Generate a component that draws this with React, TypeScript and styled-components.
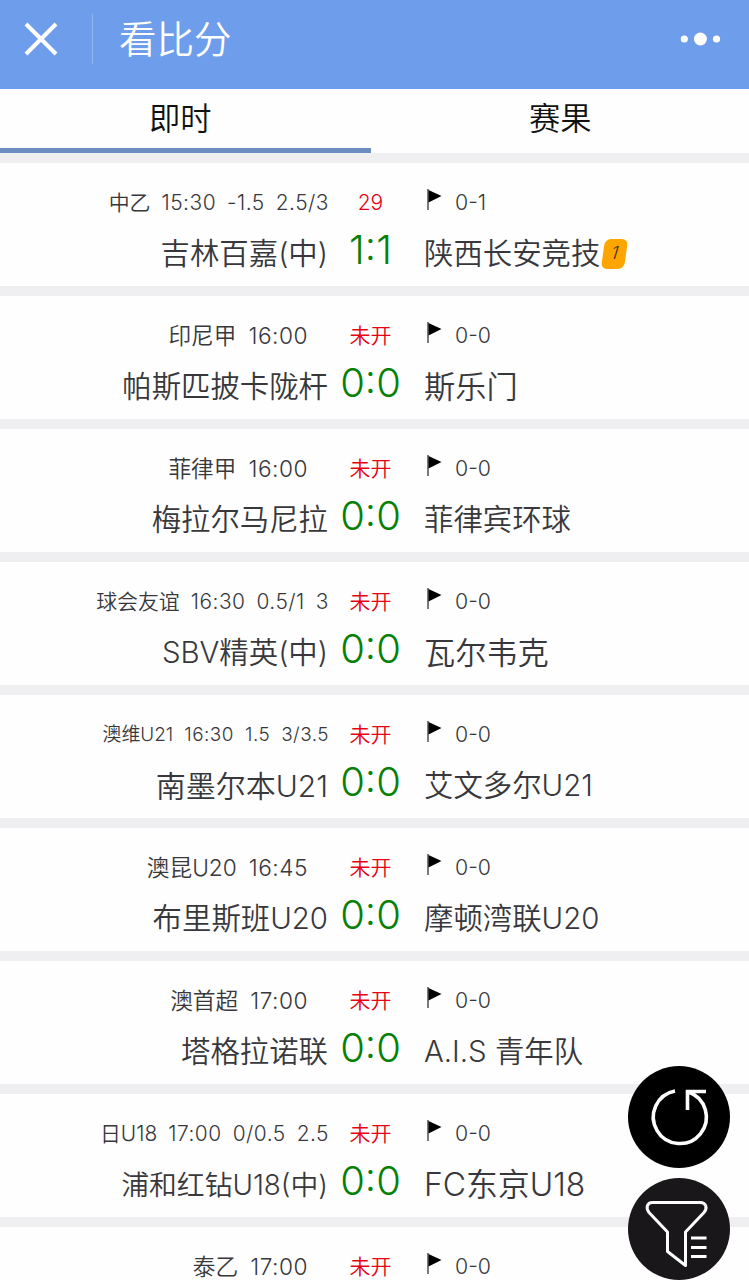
import React from 'react';
import styled, { createGlobalStyle } from 'styled-components';

const GlobalStyle = createGlobalStyle`
  * { box-sizing: border-box; }
  html, body { margin: 0; height: 1280px; overflow: hidden; background: #efeff2; }
  body {
    font-family: Inter, "Noto Sans CJK SC", sans-serif;
    font-weight: 350;
    color: #38383c;
  }
`;

const Screen = styled.div`
  position: relative;
  width: 749px;
  height: 1280px;
  overflow: hidden;
`;

const Header = styled.header`
  display: flex;
  align-items: center;
  height: 89px;
  padding: 0 28px 11px 24px;
  background: #6e9dec;
  color: #fff;
`;

const HeaderDivider = styled.span`
  width: 1px;
  height: 50px;
  margin: 0 26px 0 34px;
  background: #93b6f1;
`;

const Title = styled.h1`
  flex: 1;
  margin: 0;
  padding-top: 1px;
  font-size: 37.5px;
  font-weight: 350;
  line-height: 78px;
`;

const Tabs = styled.nav`
  display: flex;
  height: 64px;
  margin-bottom: 10px;
  background: #fefefe;
`;

const Tab = styled.div<{ $active?: boolean }>`
  flex: 0 0 ${(p) => (p.$active ? '371px' : '378px')};
  padding-left: ${(p) => (p.$active ? '149px' : '158px')};
  border-bottom: 5px solid ${(p) => (p.$active ? '#6b8dbf' : 'transparent')};
  color: #111;
  font-size: 31.3px;
  line-height: 61px;
`;

const List = styled.main`
  display: flex;
  flex-direction: column;
  gap: 10px;
`;

const Card = styled.article`
  display: grid;
  grid-template-columns: 328px 85px 1fr;
  grid-template-rows: 40px 60px;
  align-items: center;
  height: 123px;
  padding-top: 20px;
  background: #fefefe;
  white-space: nowrap;
`;

const Meta = styled.div<{ $size: number; $short: boolean }>`
  display: flex;
  justify-content: flex-end;
  gap: ${(p) => (p.$short ? 12 : 11)}px;
  padding-right: ${(p) => (p.$short ? 20 : 0)}px;
  margin-right: ${(p) => (p.$short ? 0 : -1)}px;
  font-size: ${(p) => p.$size}px;
  font-weight: 300;
  letter-spacing: 0.5px;
  line-height: 40px;
`;

const League = styled.span`
  letter-spacing: 0;
  font-weight: 350;
`;

const Status = styled.div`
  text-align: center;
  font-size: 21px;
  line-height: 40px;
  color: #e60012;
`;

const Corner = styled.div`
  display: flex;
  align-items: center;
  gap: 13px;
  padding: 0 0 2px 14px;
  font-size: 21.3px;
  font-weight: 300;
  line-height: 40px;

  svg { margin-bottom: 6px; }
`;

const Team = styled.div<{ $size: number; $home?: boolean }>`
  display: flex;
  align-items: center;
  justify-content: ${(p) => (p.$home ? 'flex-end' : 'flex-start')};
  padding: 2px 0 0 ${(p) => (p.$home ? 0 : 11)}px;
  font-size: ${(p) => p.$size}px;
  line-height: 60px;
`;

const Score = styled.div`
  padding-bottom: 6px;
  text-align: center;
  font-size: 40px;
  line-height: 54px;
  color: #078007;
`;

const CardBadge = styled.span`
  width: 23px;
  height: 30px;
  margin: 0 0 1px 3px;
  border-radius: 6px;
  background: #ffa500;
  transform: skewX(-8deg);
  color: #3a3020;
  font-size: 18px;
  font-style: italic;
  line-height: 28px;
  text-align: center;
`;

const FloatingActions = styled.div`
  position: absolute;
  top: 1066px;
  left: 628px;
  display: flex;
  flex-direction: column;
  gap: 10px;
`;

const RoundButton = styled.button<{ $color: string }>`
  width: 102px;
  height: 102px;
  padding: 0;
  border: 0;
  border-radius: 50%;
  background: ${(p) => p.$color};

  svg { display: block; }
`;

const CloseIcon = () => (
  <svg width="34" height="34" viewBox="0 0 34 34" fill="none" stroke="#fff" strokeWidth="4">
    <path d="M2 2 32 32M32 2 2 32" />
  </svg>
);

const MoreIcon = () => (
  <svg width="41" height="14" viewBox="0 0 41 14" fill="#fff">
    <circle cx="4.3" cy="7" r="3.6" />
    <circle cx="20.4" cy="7" r="6.5" />
    <circle cx="36.5" cy="7" r="3.6" />
  </svg>
);

const FlagIcon = () => (
  <svg width="15" height="22" viewBox="0 0 15 22">
    <path d="M1 1V22" stroke="#333" strokeWidth="1.3" />
    <path d="M1.5 2 14.5 8 1.5 14.5Z" fill="#000" />
  </svg>
);

const RefreshIcon = () => (
  <svg width="102" height="102" viewBox="0 0 102 102" fill="none" stroke="#fff" strokeWidth="3.6">
    <path d="M47 25A26.500 26.500 0 1 0 60.500 26" />
    <path d="M59.500 44V25.500H78" />
  </svg>
);

const FilterIcon = () => (
  <svg width="102" height="102" viewBox="0 0 102 102" fill="none" stroke="#fff" strokeWidth="3" strokeLinejoin="round">
    <path d="M24.500 24.500H72C78.500 24.500 79.500 30.500 76 34.500L57.500 54V87.500L39.500 73.500V54L21 34.500C17.500 30 19 24.500 24.500 24.500Z" />
    <path d="M63 60H78.500M63 69.500H78.500M63 78.500H78.500" />
  </svg>
);

interface Match {
  meta: string[];
  metaSize: number;
  status: string;
  corner: string;
  home: string;
  homeSize?: number;
  score: string;
  away: string;
  awaySize?: number;
  cards?: number;
}

const matches: Match[] = [
  { meta: ['中乙', '15:30', '-1.5', '2.5/3'], metaSize: 20.9, status: '29', corner: '0-1', home: '吉林百嘉(中)', score: '1:1', away: '陕西长安竞技', cards: 1 },
  { meta: ['印尼甲', '16:00'], metaSize: 22.7, status: '未开', corner: '0-0', home: '帕斯匹披卡陇杆', score: '0:0', away: '斯乐门', awaySize: 31.2 },
  { meta: ['菲律甲', '16:00'], metaSize: 22.7, status: '未开', corner: '0-0', home: '梅拉尔马尼拉', score: '0:0', away: '菲律宾环球' },
  { meta: ['球会友谊', '16:30', '0.5/1', '3'], metaSize: 20.9, status: '未开', corner: '0-0', home: 'SBV精英(中)', score: '0:0', away: '瓦尔韦克', awaySize: 31.2 },
  { meta: ['澳维U21', '16:30', '1.5', '3/3.5'], metaSize: 18.9, status: '未开', corner: '0-0', home: '南墨尔本U21', homeSize: 30, score: '0:0', away: '艾文多尔U21' },
  { meta: ['澳昆U20', '16:45'], metaSize: 22.7, status: '未开', corner: '0-0', home: '布里斯班U20', score: '0:0', away: '摩顿湾联U20' },
  { meta: ['澳首超', '17:00'], metaSize: 22.7, status: '未开', corner: '0-0', home: '塔格拉诺联', score: '0:0', away: 'A.I.S 青年队' },
  { meta: ['日U18', '17:00', '0/0.5', '2.5'], metaSize: 20.9, status: '未开', corner: '0-0', home: '浦和红钻U18(中)', homeSize: 27.8, score: '0:0', away: 'FC东京U18', awaySize: 31.9 },
  { meta: ['泰乙', '17:00'], metaSize: 22.7, status: '未开', corner: '0-0', home: '', score: '', away: '' },
];

const MatchCard = ({ match }: { match: Match }) => {
  const [league, ...details] = match.meta;
  return (
    <Card>
      <Meta $size={match.metaSize} $short={details.length === 1}>
        <League>{league}</League>
        {details.map((part) => <span key={part}>{part}</span>)}
      </Meta>
      <Status>{match.status}</Status>
      <Corner><FlagIcon /><span>{match.corner}</span></Corner>
      <Team $home $size={match.homeSize ?? 29.4}>{match.home}</Team>
      <Score>{match.score}</Score>
      <Team $size={match.awaySize ?? 29.4}>
        {match.away}
        {match.cards && <CardBadge>{match.cards}</CardBadge>}
      </Team>
    </Card>
  );
};

export default function App() {
  return (
    <Screen>
      <GlobalStyle />
      <Header>
        <CloseIcon />
        <HeaderDivider />
        <Title>看比分</Title>
        <MoreIcon />
      </Header>
      <Tabs>
        <Tab $active>即时</Tab>
        <Tab>赛果</Tab>
      </Tabs>
      <List>
        {matches.map((match) => <MatchCard key={match.meta[0]} match={match} />)}
      </List>
      <FloatingActions>
        <RoundButton $color="#000" aria-label="刷新"><RefreshIcon /></RoundButton>
        <RoundButton $color="#19171a" aria-label="筛选"><FilterIcon /></RoundButton>
      </FloatingActions>
    </Screen>
  );
}
